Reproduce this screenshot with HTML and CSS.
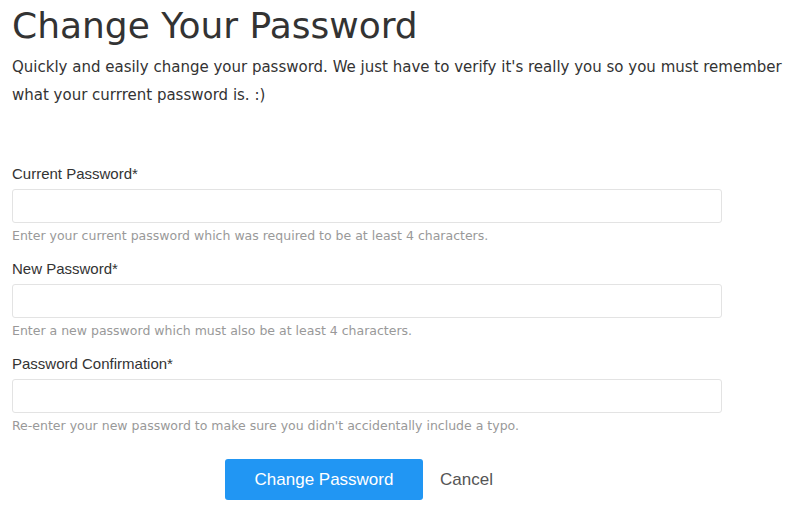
FILE: index.html
```html
<!DOCTYPE html>
<html lang="en">
  <head>
    <title>Change Your Password</title>
    <link rel="stylesheet" href="styles.css">
  </head>
  <body>
  <div class="page">
    <h1>Change Your Password</h1>
    <p class="intro">Quickly and easily change your password. We just have to verify it's really you so you must remember what your currrent password is. :)</p>

    <form class="password-form">
      <div class="field">
        <label for="current">Current Password*</label>
        <input type="password" id="current">
        <div class="help">Enter your current password which was required to be at least 4 characters.</div>
      </div>
      <div class="field">
        <label for="new">New Password*</label>
        <input type="password" id="new">
        <div class="help">Enter a new password which must also be at least 4 characters.</div>
      </div>
      <div class="field">
        <label for="confirm">Password Confirmation*</label>
        <input type="password" id="confirm">
        <div class="help">Re-enter your new password to make sure you didn't accidentally include a typo.</div>
      </div>
      <div class="actions">
        <button type="submit" class="submit-btn">Change Password</button>
        <a href="#" class="cancel-link">Cancel</a>
      </div>
    </form>
  </div>
  </body>
</html>
```

FILE: styles.css
```css
* {
  margin: 0;
  padding: 0;
  box-sizing: border-box;
}

body {
  background: #ffffff;
  font-family: 'DejaVu Sans', Verdana, sans-serif;
  color: #333;
}

.page {
  padding: 4px 0 0 12px;
}

h1 {
  font-weight: 400;
  font-size: 36px;
  line-height: 44px;
  color: #333;
}

.intro {
  font-size: 15px;
  line-height: 28px;
  color: #333;
  margin-top: 5px;
}

.password-form {
  width: 710px;
  margin-top: 56px;
}

.field {
  margin-bottom: 17px;
}

.field label {
  display: block;
  font-family: 'Liberation Sans', Arial, sans-serif;
  font-size: 15px;
  line-height: 17px;
  color: #333;
  margin-bottom: 7px;
}

.field input {
  display: block;
  width: 100%;
  height: 34px;
  border: 1px solid #e3e3e3;
  border-radius: 3px;
  outline: none;
}

.help {
  font-size: 12.5px;
  line-height: 15px;
  color: #999;
  margin-top: 5px;
}

.actions {
  display: flex;
  align-items: center;
  padding-left: 213px;
  gap: 17px;
  margin-top: 26px;
}

.submit-btn {
  width: 198px;
  height: 41px;
  background: #2196f3;
  color: #fff;
  border: none;
  border-radius: 3px;
  font-family: 'Liberation Sans', Arial, sans-serif;
  font-size: 17px;
  cursor: pointer;
}

.cancel-link {
  font-family: 'Liberation Sans', Arial, sans-serif;
  font-size: 17px;
  color: #555;
  text-decoration: none;
}
```
